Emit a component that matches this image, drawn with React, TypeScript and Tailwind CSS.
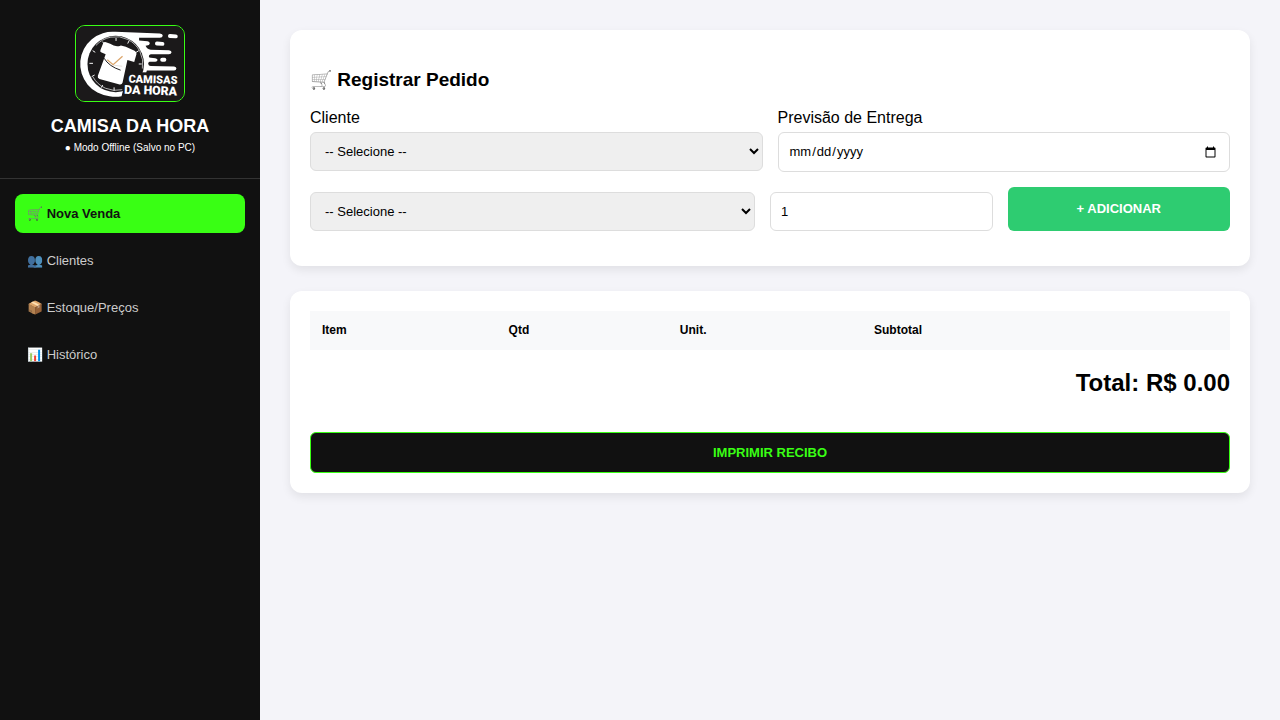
import { useState } from 'react';

const menu = [
    { id: 'venda', icon: '🛒', label: 'Nova Venda', tone: 'grayscale brightness-75' },
    { id: 'clientes', icon: '👥', label: 'Clientes', tone: 'saturate-50' },
    { id: 'estoque', icon: '📦', label: 'Estoque/Preços', tone: '' },
    { id: 'historico', icon: '📊', label: 'Histórico', tone: '' },
];

const field = 'block w-full rounded-md border border-[#ddd] text-[13px] text-black';

function Logo() {
    return (
        <svg viewBox="15 15 330 231" className="block h-full w-full" role="img" aria-label="Camisas da Hora">
            <rect x="15" y="15" width="330" height="231" fill="#1b191a" />
            {/* anel do relógio */}
            <path
                d="M135 33 L272 38 Q281 39 281 45 Q280 51 272 51 L208 51 L208 60 L234 62 Q241 63 241 69 Q240 75 232 75 L228 76 Q232 87 244 88 L300 90 Q308 91 308 96 Q307 102 300 102 L244 102 Q238 103 238 108 Q238 113 244 113 L258 114 Q265 115 265 120 Q264 125 258 125 L240 125 Q236 126 236 131 Q237 138 244 138 L316 140 Q323 141 323 146 Q322 152 316 152 L232 152 L230 158 L178 158 L164 192 L154 231 Q136 235 117 231 A99 99 0 0 1 135 33Z"
                fill="#fff"
            />
            <circle cx="136" cy="132" r="87" fill="#1b191a" />
            <path d="M75 75A83 83 0 0 1 218 146" fill="none" stroke="#fff" strokeWidth="2" />
            <path d="M66 172A81 81 0 0 0 156 211" fill="none" stroke="#fff" strokeWidth="2" />
            <path
                d="M137 52V61M96 63l4 8M65 91l8 5M55 130h11M62 171l9-5M91 205l5-8M131 214v-10M177 61l-4 8M207 91l-8 5M216 132h-9"
                stroke="#fff"
                strokeWidth="3"
            />
            {/* linhas de velocidade */}
            <g stroke="#fff" strokeWidth="12" strokeLinecap="round">
                <path d="M303 46L321 47" />
                <path d="M263 69L280 70" />
                <path d="M279 119L286 119" />
            </g>
            {/* camiseta */}
            <path
                d="M106 65 L119 70 Q136 82 152 75 L167 79 L194 91 Q201 95 200 101 L193 126 L172 120 L157 190 Q155 196 148 195 L86 178 Q79 175 81 168 L105 102 L91 96 Q87 94 89 89 L97 69 Q100 63 106 65Z"
                fill="#fff"
            />
            <path d="M110 119L128 134L157 108" fill="none" stroke="#dca66c" strokeWidth="4" />
            <path d="M130 136L156 139" stroke="#d8cfc8" strokeWidth="2" />
            <path d="M100 114Q116 140 151 151" fill="none" stroke="#1b191a" strokeWidth="3" />
            {/* nome */}
            <path d="M180 158L325 160L325 232L157 228L163 192L175 190Z" fill="#1b191a" />
            <g fill="#fff" fontWeight="900" fontFamily="Roboto, 'Liberation Sans', sans-serif" transform="rotate(2 240 192)">
                <text x="175" y="191" fontSize="34">CAMISAS</text>
                <text x="163" y="226" fontSize="38">DA HORA</text>
            </g>
        </svg>
    );
}

function Sidebar() {
    const [active, setActive] = useState('venda');

    return (
        <aside className="w-[260px] shrink-0 bg-[#111] text-white">
            <header className="flex flex-col items-center border-b border-[#333] pt-[25px] pb-6">
                <div className="h-[77px] w-[110px] overflow-hidden rounded-[10px] border border-[#39ff14]">
                    <Logo />
                </div>
                <h2 className="mt-3.5 text-lg leading-[21px] font-bold">CAMISA DA HORA</h2>
                <p className="mt-[5px] text-[10px] leading-3">● Modo Offline (Salvo no PC)</p>
            </header>
            <nav className="flex flex-col gap-2 p-[15px]">
                {menu.map((item) => (
                    <button
                        key={item.id}
                        type="button"
                        onClick={() => setActive(item.id)}
                        className={
                            item.id === active
                                ? 'rounded-lg bg-[#39ff14] p-3 text-left text-[13px] leading-[15px] font-bold text-[#111]'
                                : 'rounded-lg p-3 text-left text-[13px] leading-[15px] text-[#ccc]'
                        }
                    >
                        <span className={item.tone}>{item.icon}</span> {item.label}
                    </button>
                ))}
            </nav>
        </aside>
    );
}

function PedidoForm() {
    const [qtd, setQtd] = useState('1');
    const [entrega, setEntrega] = useState('');

    return (
        <section className="rounded-xl bg-white p-5 shadow-[0_4px_10px_rgba(0,0,0,0.08)]">
            <h3 className="my-[19px] text-[19px] leading-[21px] font-bold">
                <span className="text-lg leading-none grayscale">🛒</span> Registrar Pedido
            </h3>
            <div className="mb-[15px] grid grid-cols-2 gap-[15px]">
                <div>
                    <label htmlFor="cliente" className="block leading-[18px]">Cliente</label>
                    <select id="cliente" className={`${field} mt-[5px] h-[39px] bg-[#efefef] px-2.5`}>
                        <option>-- Selecione --</option>
                    </select>
                </div>
                <div>
                    <label htmlFor="entrega" className="block leading-[18px]">Previsão de Entrega</label>
                    <input
                        id="entrega"
                        type="date"
                        value={entrega}
                        onChange={(e) => setEntrega(e.target.value)}
                        className={`${field} mt-[5px] h-10 bg-white px-2.5`}
                    />
                </div>
            </div>
            <div className="mb-[15px] grid grid-cols-[2fr_1fr_1fr] gap-[15px]">
                <select aria-label="Produto" className={`${field} mt-[5px] h-[39px] bg-[#efefef] px-2.5`}>
                    <option>-- Selecione --</option>
                </select>
                <input
                    type="number"
                    aria-label="Quantidade"
                    value={qtd}
                    onChange={(e) => setQtd(e.target.value)}
                    className={`${field} mt-[5px] h-[39px] bg-white px-2.5`}
                />
                <button type="button" className="rounded-md bg-[#2ecc71] text-[13px] font-bold text-white">
                    + ADICIONAR
                </button>
            </div>
        </section>
    );
}

function Carrinho() {
    return (
        <section className="rounded-xl bg-white p-5 shadow-[0_4px_10px_rgba(0,0,0,0.08)]">
            <table className="w-full border-collapse text-left text-xs">
                <thead>
                    <tr className="bg-[#f8f9fa] leading-[15px]">
                        <th className="p-3">Item</th>
                        <th className="p-3">Qtd</th>
                        <th className="p-3">Unit.</th>
                        <th className="p-3">Subtotal</th>
                        <th className="p-3"></th>
                    </tr>
                </thead>
                <tbody></tbody>
            </table>
            <h2 className="mt-[19px] mb-9 text-right text-2xl leading-[27px] font-bold">Total: R$ 0.00</h2>
            <button
                type="button"
                className="block w-full rounded-md border border-[#39ff14] bg-[#111] p-3 text-[13px] leading-[15px] font-bold text-[#39ff14]"
            >
                IMPRIMIR RECIBO
            </button>
        </section>
    );
}

export default function App() {
    return (
        <div className="flex min-h-screen bg-[#f4f4f9] font-['Liberation_Sans',Arial,sans-serif] text-black">
            <Sidebar />
            <main className="flex min-w-0 flex-1 flex-col gap-[25px] p-[30px]">
                <PedidoForm />
                <Carrinho />
            </main>
        </div>
    );
}
